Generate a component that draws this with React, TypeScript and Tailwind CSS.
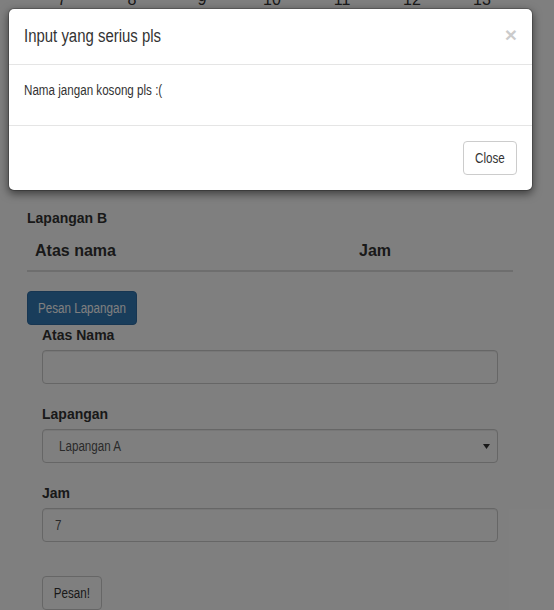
import React from "react";

const narrow = "font-['Liberation_Sans',Arial,sans-serif]";

function C({ children, center = false }: { children: React.ReactNode; center?: boolean }) {
  return (
    <span
      className={`inline-block whitespace-nowrap scale-x-[0.83] ${center ? "origin-center" : "origin-left"}`}
    >
      {children}
    </span>
  );
}

export default function App() {
  const nums = ["7", "8", "9", "10", "11", "12", "13"];
  return (
    <div className="relative w-[554px] h-[610px] overflow-hidden bg-white text-[#333] font-['Liberation_Sans',Arial,sans-serif]">
      <div className="px-[27px]">
        <div className="flex -mt-[10px] h-[20px] text-[16px] leading-[20px]">
          {nums.map((n) => (
            <div key={n} className="w-[70px] text-center">
              {n}
            </div>
          ))}
        </div>
        <div className="w-[486px]">
          <div className="mt-[198px] text-[14px] leading-[20px] font-bold">Lapangan B</div>
          <div className="mt-[4px] grid grid-cols-[324px_1fr] border-b-2 border-[#ddd] text-[16px] leading-[22px] font-bold">
            <div className="p-[8px]">Atas nama</div>
            <div className="p-[8px]">Jam</div>
          </div>
          <button
            className={`mt-[19px] flex justify-center w-[110px] py-[6px] text-[14px] leading-[20px] text-white bg-[#337ab7] border border-[#2e6da4] rounded-[4px] ${narrow}`}
          >
            <C center>Pesan Lapangan</C>
          </button>
          <div className="px-[15px]">
            <label className="block text-[14px] leading-[20px] font-bold mb-[5px]">Atas Nama</label>
            <div className="h-[34px] border border-[#ccc] rounded-[4px] bg-white shadow-[inset_0_1px_1px_rgba(0,0,0,0.075)]" />

            <label className="block mt-[20px] text-[14px] leading-[20px] font-bold mb-[5px]">Lapangan</label>
            <div
              className={`relative h-[34px] border border-[#ccc] rounded-[4px] bg-white flex items-center pl-[16px] text-[14px] text-[#555] ${narrow} shadow-[inset_0_1px_1px_rgba(0,0,0,0.075)]`}
            >
              <C>Lapangan A</C>
              <svg className="absolute right-[7px] top-[14px]" width="7" height="5" viewBox="0 0 7 5">
                <path d="M0 0 L7 0 L3.5 5 Z" fill="#333" />
              </svg>
            </div>

            <label className="block mt-[20px] text-[14px] leading-[20px] font-bold mb-[5px]">Jam</label>
            <div
              className={`h-[34px] border border-[#ccc] rounded-[4px] bg-white flex items-center pl-[12px] text-[14px] text-[#555] ${narrow} shadow-[inset_0_1px_1px_rgba(0,0,0,0.075)]`}
            >
              <C>7</C>
            </div>

            <button
              className={`mt-[34px] flex justify-center w-[60px] py-[6px] text-[14px] leading-[20px] text-[#333] bg-white border border-[#ccc] rounded-[4px] ${narrow}`}
            >
              <C center>Pesan!</C>
            </button>
          </div>
        </div>
      </div>

      {/* backdrop */}
      <div className="absolute inset-0 bg-black/50" />

      {/* modal */}
      <div className="absolute left-[8px] top-[8px] w-[525px] bg-white bg-clip-padding border border-black/20 rounded-[6px] shadow-[0_3px_9px_rgba(0,0,0,0.5)]">
        <div className={`relative p-[15px] border-b border-[#e5e5e5] ${narrow}`}>
          <h4 className="text-[18px] leading-[25px] text-[#333]">
            <C>Input yang serius pls</C>
          </h4>
          <span className="absolute right-[15px] top-[15px] text-[21px] leading-none font-bold text-black opacity-20 font-['Liberation_Sans',sans-serif]">
            ×
          </span>
        </div>
        <div className={`p-[15px] ${narrow}`}>
          <p className="mb-[10px] text-[14px] leading-[20px]">
            <C>Nama jangan kosong pls :(</C>
          </p>
        </div>
        <div className={`flex justify-end p-[15px] border-t border-[#e5e5e5] ${narrow}`}>
          <button className="flex justify-center w-[54px] py-[6px] text-[14px] leading-[20px] text-[#333] bg-white border border-[#ccc] rounded-[4px]">
            <C center>Close</C>
          </button>
        </div>
      </div>
    </div>
  );
}
